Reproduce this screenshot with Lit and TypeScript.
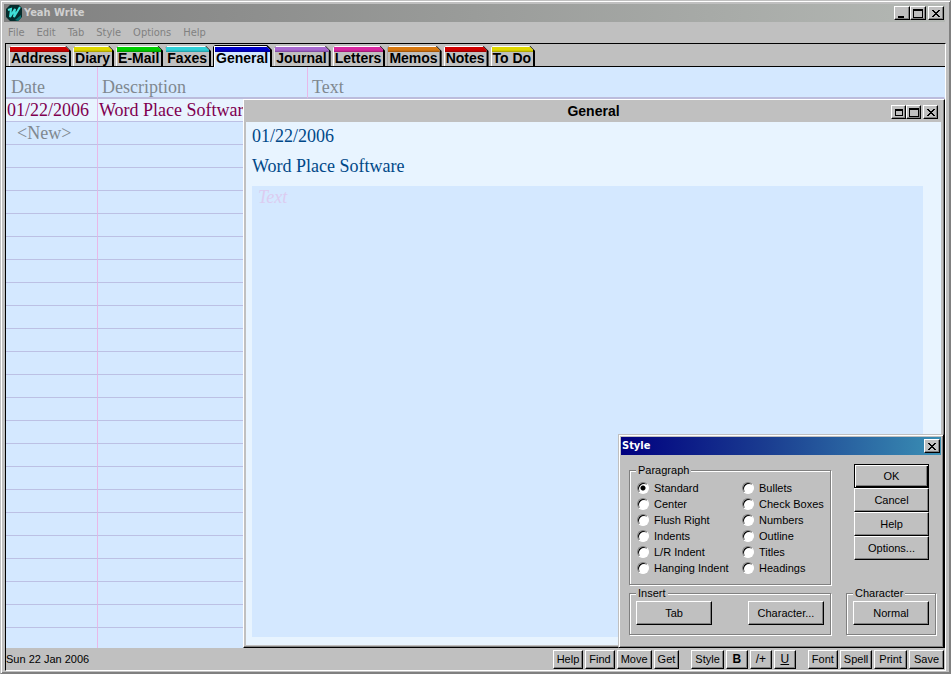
import { LitElement, html, svg, css } from "lit";
import { customElement, property, state } from "lit/decorators.js";
import { classMap } from "lit/directives/class-map.js";

type CaptionKind = "minimize" | "restore" | "maximize" | "close";

const GLYPHS = {
  minimize: svg`<path d="M2 9h6v2H2z" />`,
  restore: svg`<path fill-rule="evenodd" d="M2 3h8v7H2zM3 5v4h6V5z" />`,
  maximize: svg`<path fill-rule="evenodd" d="M1 2h10v9H1zM2 4v6h8V4z" />`,
  close: svg`<path d="M2 3h2v1h1v1h2V4h1V3h2v1H9v1H8v1H7v1h1v1h1v1h1v1H8V9H7V8H5v1H4v1H2V9h1V8h1V7h1V6H4V5H3V4H2z" />`,
};

@customElement("caption-button")
export class CaptionButton extends LitElement {
  @property() kind: CaptionKind = "close";

  static styles = css`
    :host {
      display: block;
    }
    button {
      display: grid;
      place-items: center;
      box-sizing: border-box;
      width: 16px;
      height: 14px;
      padding: 0;
      border: 1px solid;
      border-color: #fff #000 #000 #fff;
      background: #c0c0c0;
      box-shadow: inset -1px -1px #808080;
    }
    :host([small]) button {
      width: 15px;
    }
    svg {
      display: block;
      width: 12px;
      height: 12px;
    }
  `;

  render() {
    return html`<button type="button" aria-label=${this.kind}>
      <svg viewBox="0 0 12 12" shape-rendering="crispEdges" aria-hidden="true">${GLYPHS[this.kind]}</svg>
    </button>`;
  }
}

@customElement("style-dialog")
export class StyleDialog extends LitElement {
  @state() private selected = "Standard";

  private paragraphStyles = [
    "Standard", "Center", "Flush Right", "Indents", "L/R Indent", "Hanging Indent",
    "Bullets", "Check Boxes", "Numbers", "Outline", "Titles", "Headings",
  ];

  static styles = css`
    :host {
      display: block;
      box-sizing: border-box;
      background: #c0c0c0;
      border: 1px solid;
      border-color: #c0c0c0 #000 #000 #c0c0c0;
      box-shadow: inset 1px 1px #fff, inset -1px -1px #808080;
      padding: 2px;
      font: 11px/13px "Liberation Sans", Arial, sans-serif;
      color: #000;
    }
    .title {
      display: flex;
      align-items: center;
      justify-content: space-between;
      height: 18px;
      padding: 0 1px;
      background: linear-gradient(90deg, #000080, #1a3c90 45%, #3a8fb4);
    }
    h2 {
      margin: 0;
      color: #fff;
      font: bold 11px/18px "DejaVu Sans Condensed", "DejaVu Sans", sans-serif;
    }
    .body {
      display: grid;
      grid-template-columns: 202px 90px;
      justify-content: space-between;
      gap: 2px;
      padding: 9px 5px 10px 8px;
    }
    fieldset {
      box-sizing: border-box;
      min-width: 0;
      margin: 0;
      padding: 0 6px;
      border: 1px solid #808080;
      box-shadow: 1px 1px #fff, inset 1px 1px #fff;
    }
    legend {
      padding: 0 2px;
      background: #c0c0c0;
    }
    .choices {
      display: grid;
      grid-template-rows: repeat(6, 16px);
      grid-auto-flow: column;
      grid-template-columns: 105px 1fr;
      height: 107px;
      padding: 3px 0 0 1px;
      box-sizing: border-box;
    }
    .choices label {
      display: flex;
      align-items: center;
      gap: 5px;
      white-space: nowrap;
    }
    input {
      appearance: none;
      flex: none;
      box-sizing: border-box;
      width: 12px;
      height: 12px;
      margin: 0;
      border: 1px solid;
      border-color: #808080 #fff #fff #808080;
      border-radius: 50%;
      background: #fff;
      box-shadow: inset 1px 1px #000;
    }
    input:checked {
      background: radial-gradient(circle, #000 2px, #fff 3px);
    }
    .actions {
      display: flex;
      flex-direction: column;
      padding: 0 7px 0 8px;
    }
    .button {
      width: 76px;
      height: 24px;
      padding: 0;
      border: 1px solid;
      border-color: #fff #000 #000 #fff;
      background: #c0c0c0;
      box-shadow: inset -1px -1px #808080;
      font: inherit;
      color: #000;
    }
    .actions .button {
      width: 100%;
    }
    .default {
      border-color: #000;
      box-shadow: inset 1px 1px #fff, inset -1px -1px #000, inset -2px -2px #808080;
    }
    .row {
      display: flex;
      justify-content: space-between;
      height: 34px;
      align-items: flex-start;
      padding-top: 1px;
      box-sizing: border-box;
    }
  `;

  render() {
    return html`
      <div class="title">
        <h2>Style</h2>
        <caption-button kind="close"></caption-button>
      </div>
      <div class="body">
        <fieldset>
          <legend>Paragraph</legend>
          <div class="choices">
            ${this.paragraphStyles.map(
              (name) => html`<label>
                <input type="radio" name="paragraph" .checked=${this.selected === name}
                  @change=${() => (this.selected = name)} />${name}
              </label>`,
            )}
          </div>
        </fieldset>
        <div class="actions">
          <button type="button" class="button default">OK</button>
          <button type="button" class="button">Cancel</button>
          <button type="button" class="button">Help</button>
          <button type="button" class="button">Options...</button>
        </div>
        <fieldset>
          <legend>Insert</legend>
          <div class="row">
            <button type="button" class="button">Tab</button>
            <button type="button" class="button">Character...</button>
          </div>
        </fieldset>
        <fieldset>
          <legend>Character</legend>
          <div class="row">
            <button type="button" class="button">Normal</button>
          </div>
        </fieldset>
      </div>
    `;
  }
}

@customElement("app-root")
export class AppRoot extends LitElement {
  @state() private active = "General";

  private menus = ["File", "Edit", "Tab", "Style", "Options", "Help"];

  private tabs = [
    { name: "Address", tone: "red" },
    { name: "Diary", tone: "yellow" },
    { name: "E-Mail", tone: "green" },
    { name: "Faxes", tone: "cyan" },
    { name: "General", tone: "blue" },
    { name: "Journal", tone: "purple" },
    { name: "Letters", tone: "magenta" },
    { name: "Memos", tone: "orange" },
    { name: "Notes", tone: "red" },
    { name: "To Do", tone: "yellow" },
  ];

  private emptyRows = Array.from({ length: 22 });

  static styles = css`
    :host {
      display: flex;
      flex-direction: column;
      box-sizing: border-box;
      height: 100vh;
      padding: 2px;
      border: 1px solid;
      border-color: #c0c0c0 #808080 #808080 #c0c0c0;
      box-shadow: inset 1px 1px #fff, inset -1px -1px #808080;
      background: #c0c0c0;
      color: #000;
      font: 11px/13px "Liberation Sans", Arial, sans-serif;
    }
    .titlebar {
      display: flex;
      align-items: center;
      flex: none;
      height: 18px;
      margin: 1px 3px 0 1px;
      padding-right: 1px;
      background: linear-gradient(90deg, #808080, #b4b8b4);
    }
    .logo {
      width: 16px;
      height: 16px;
      margin: 0 2px;
    }
    h1 {
      flex: 1;
      margin: 0;
      color: #d0d0d0;
      font: bold 11px/18px "DejaVu Sans Condensed", "DejaVu Sans", sans-serif;
    }
    .gap {
      margin-left: 2px;
    }
    .menubar {
      display: flex;
      flex: none;
      gap: 12px;
      height: 21px;
      padding-left: 5px;
    }
    .menubar button {
      padding: 0;
      border: 0;
      background: none;
      color: #808080;
      font: 11px/19px "DejaVu Sans Condensed", "DejaVu Sans", sans-serif;
    }
    .frame {
      display: flex;
      flex-direction: column;
      flex: 1;
      min-height: 0;
      margin: 0 2px;
      border: 1px solid;
      border-color: #000 #fff #fff #000;
    }
    .tabs {
      display: flex;
      flex: none;
      align-items: flex-end;
      gap: 2px;
      height: 23px;
      padding-left: 3px;
      box-sizing: border-box;
      border-bottom: 1px solid #000;
    }
    .tab {
      height: 20px;
      padding: 0 2px 0 0;
      border: 0;
      background: #000;
      clip-path: polygon(0 2px, 2px 0, calc(100% - 5px) 0, 100% 5px, 100% 100%, 0 100%);
      color: #000;
      font: bold 14px/12px "Liberation Sans", Arial, sans-serif;
    }
    .face {
      display: block;
      box-sizing: border-box;
      height: 20px;
      padding: 0 2px 0 1px;
      border-top: 1px solid #fff;
      border-left: 1px solid #fff;
      background: #c0c0c0;
      clip-path: polygon(0 0, calc(100% - 4px) 0, 100% 4px, 100% 100%, 0 100%);
    }
    .face::before {
      content: "";
      display: block;
      height: 5px;
      margin: 0 -2px 0 -1px;
      background: linear-gradient(var(--tone) 60%, var(--shade));
    }
    .active {
      height: 22px;
      padding: 1px 2px 0 1px;
      margin-bottom: -1px;
    }
    .active .face {
      height: 21px;
      background: #d4e8ff;
    }
    .red { --tone: #d00000; --shade: #900000; }
    .yellow { --tone: #e0d800; --shade: #a09800; }
    .green { --tone: #00cc00; --shade: #009000; }
    .cyan { --tone: #30d0d8; --shade: #2098a0; }
    .blue { --tone: #0000c8; --shade: #000090; }
    .purple { --tone: #a868d0; --shade: #784498; }
    .magenta { --tone: #d828a0; --shade: #981870; }
    .orange { --tone: #d87810; --shade: #985008; }

    .workspace {
      position: relative;
      flex: 1;
      min-height: 0;
      overflow: hidden;
      background: #d4e8ff;
      font: 18px/20px "Liberation Serif", "Times New Roman", serif;
    }
    table {
      width: 100%;
      border-collapse: separate;
      border-spacing: 0;
      table-layout: fixed;
    }
    .date { width: 92px; }
    .description { width: 210px; }
    th,
    td {
      box-sizing: border-box;
      height: 23px;
      padding: 0 1px;
      border-bottom: 1px solid #bcc0e4;
      border-right: 1px solid #e8b8e8;
      text-align: left;
      font-weight: normal;
      white-space: nowrap;
      overflow: hidden;
      color: #808890;
    }
    th {
      height: 32px;
      padding: 10px 4px 0;
      border-bottom: 2px solid #bcbcdc;
    }
    .date {
      padding-left: 5px;
    }
    th:last-child,
    td:nth-child(n + 2) {
      border-right-color: transparent;
    }
    .current td {
      background: #e8f4ff;
      color: #800050;
    }
    .new {
      padding-left: 11px;
    }
    .document {
      position: absolute;
      inset: 32px 0 0 237px;
      display: flex;
      flex-direction: column;
      box-sizing: border-box;
      padding: 1px 3px 2px 2px;
      border: 1px solid;
      border-color: #fff #000 #000 #fff;
      box-shadow: inset -1px -1px #808080;
      background: #c0c0c0;
      color: #004888;
    }
    .document header {
      display: flex;
      align-items: center;
      flex: none;
      height: 21px;
      padding-right: 3px;
      color: #000;
    }
    .document h2 {
      flex: 1;
      margin: 0;
      padding-left: 50px;
      text-align: center;
      font: bold 14px/21px "Liberation Sans", Arial, sans-serif;
    }
    .paper {
      display: flex;
      flex-direction: column;
      flex: 1;
      min-height: 0;
      padding: 4px 18px 8px 6px;
      background: #e8f4ff;
    }
    .paper p {
      margin: 0 0 10px;
    }
    textarea {
      flex: 1;
      min-height: 0;
      box-sizing: border-box;
      width: 100%;
      padding: 1px 6px;
      border: 0;
      background: #d4e8ff;
      color: #004888;
      font: inherit;
      resize: none;
    }
    textarea::placeholder {
      color: #dcccf0;
      font-style: italic;
      opacity: 1;
    }
    style-dialog {
      position: absolute;
      right: 1px;
      bottom: 0;
      width: 326px;
    }
    .status {
      display: flex;
      align-items: center;
      justify-content: space-between;
      flex: none;
      height: 22px;
    }
    .tools {
      display: flex;
      gap: 12px;
      padding-right: 1px;
    }
    .group {
      display: flex;
      gap: 2px;
    }
    .tool {
      box-sizing: border-box;
      height: 19px;
      padding: 0 3px;
      border: 1px solid;
      border-color: #fff #000 #000 #fff;
      background: #c0c0c0;
      box-shadow: inset -1px -1px #808080;
      color: #000;
      font: 11px/15px "Liberation Sans", Arial, sans-serif;
    }
    .wide {
      padding: 0 4px;
    }
    .narrow {
      width: 22px;
      padding: 0;
      font-size: 12px;
    }
    .bold { font-weight: bold; }
    .underline { text-decoration: underline; }
  `;

  render() {
    return html`
      <header class="titlebar">
        <svg class="logo" viewBox="0 0 16 16" aria-hidden="true">
          <path d="M4 0h9l3 3v9l-4 4H4l-4-4V4z" fill="#042c2c" />
          <path d="M9 15l6-5v3l-3 3z" fill="#087070" />
          <path d="M2 5l3-1-1 8 5-8-1 8 6-10" fill="none" stroke="#40e0d8" stroke-width="2" />
        </svg>
        <h1>Yeah Write</h1>
        <caption-button kind="minimize"></caption-button>
        <caption-button kind="maximize"></caption-button>
        <caption-button class="gap" kind="close"></caption-button>
      </header>
      <nav class="menubar">
        ${this.menus.map((name) => html`<button type="button">${name}</button>`)}
      </nav>
      <main class="frame">
        <div class="tabs" role="tablist">
          ${this.tabs.map(
            ({ name, tone }) => html`<button type="button" role="tab"
              aria-selected=${this.active === name ? "true" : "false"}
              class=${classMap({ tab: true, [tone]: true, active: this.active === name })}
              @click=${() => (this.active = name)}><span class="face">${name}</span></button>`,
          )}
        </div>
        <div class="workspace">
          <table>
            <thead>
              <tr><th class="date">Date</th><th class="description">Description</th><th>Text</th></tr>
            </thead>
            <tbody>
              <tr class="current"><td>01/22/2006</td><td>Word Place Software</td><td></td></tr>
              <tr><td class="new">&lt;New&gt;</td><td></td><td></td></tr>
              ${this.emptyRows.map(() => html`<tr><td></td><td></td><td></td></tr>`)}
            </tbody>
          </table>
          <section class="document">
            <header>
              <h2>General</h2>
              <caption-button small kind="restore"></caption-button>
              <caption-button small kind="maximize"></caption-button>
              <caption-button small class="gap" kind="close"></caption-button>
            </header>
            <div class="paper">
              <p>01/22/2006</p>
              <p>Word Place Software</p>
              <textarea aria-label="Text" placeholder="Text"></textarea>
            </div>
          </section>
          <style-dialog></style-dialog>
        </div>
        <footer class="status">
          <span>Sun 22 Jan 2006</span>
          <div class="tools">
            <div class="group">
              <button type="button" class="tool">Help</button>
              <button type="button" class="tool">Find</button>
              <button type="button" class="tool">Move</button>
              <button type="button" class="tool">Get</button>
            </div>
            <div class="group">
              <button type="button" class="tool">Style</button>
              <button type="button" class="tool narrow bold">B</button>
              <button type="button" class="tool narrow">/+</button>
              <button type="button" class="tool narrow underline">U</button>
            </div>
            <div class="group">
              <button type="button" class="tool">Font</button>
              <button type="button" class="tool">Spell</button>
              <button type="button" class="tool wide">Print</button>
              <button type="button" class="tool wide">Save</button>
            </div>
          </div>
        </footer>
      </main>
    `;
  }
}
